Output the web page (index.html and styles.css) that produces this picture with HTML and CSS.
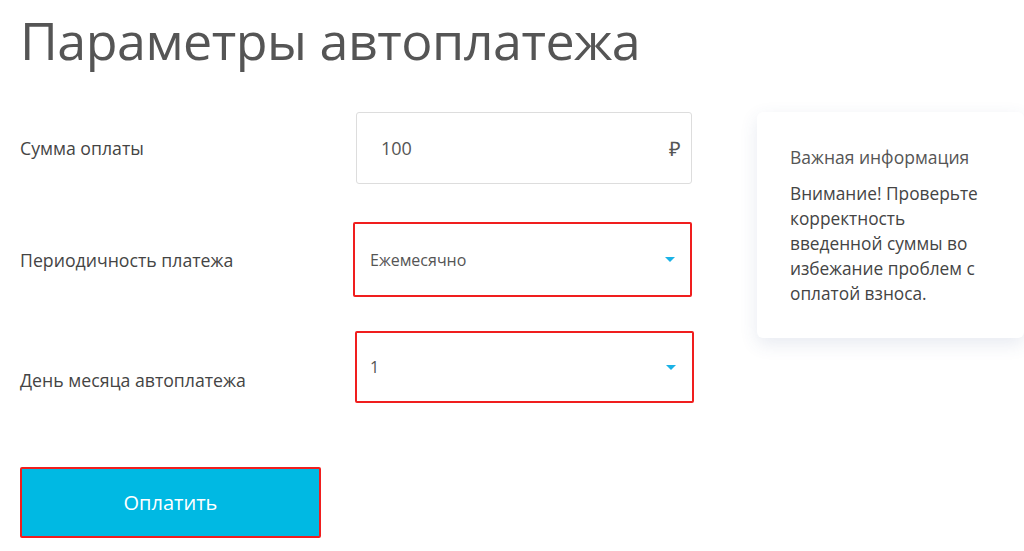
FILE: index.html
```html
<!DOCTYPE html>
<html lang="ru">
<head>
    <meta charset="utf-8">
    <title>Параметры автоплатежа</title>
    <link rel="stylesheet" href="styles.css">
</head>
<body>
    <div class="page">
        <h1 class="page-title">Параметры автоплатежа</h1>

        <div class="layout">
            <form class="autopay-form">
                <div class="form-row">
                    <label class="form-label" for="amount">Сумма оплаты</label>
                    <div class="field amount-field">
                        <input class="amount-input" id="amount" type="text" value="100">
                        <span class="currency">₽</span>
                    </div>
                </div>

                <div class="form-row">
                    <label class="form-label">Периодичность платежа</label>
                    <div class="field select-field marked">
                        <span class="select-value">Ежемесячно</span>
                        <span class="select-arrow"></span>
                    </div>
                </div>

                <div class="form-row form-row-last">
                    <label class="form-label form-label-low">День месяца автоплатежа</label>
                    <div class="field select-field select-day marked">
                        <span class="select-value">1</span>
                        <span class="select-arrow"></span>
                    </div>
                </div>

                <button class="pay-btn marked" type="button">Оплатить</button>
            </form>

            <div class="info-card">
                <div class="info-title">Важная информация</div>
                <p class="info-text">Внимание! Проверьте корректность введенной суммы во избежание проблем с оплатой взноса.</p>
            </div>
        </div>
    </div>
</body>
</html>
```

FILE: styles.css
```css
body {
    margin: 0;
    padding: 0;
    background-color: #fff;
    font-family: "Open Sans", Arial, sans-serif;
    color: #4a4a4a;
    overflow: hidden;
}

.page {
    padding: 0 0 0 20px;
}

.page-title {
    margin: 0;
    padding-top: 4px;
    font-size: 52px;
    font-weight: 400;
    line-height: 72px;
    color: #555;
    letter-spacing: -0.5px;
}

.layout {
    display: flex;
    gap: 63px;
    margin-top: 36px;
}

.autopay-form {
    display: flex;
    flex-direction: column;
    width: 674px;
    flex-shrink: 0;
}

.form-row {
    display: flex;
    align-items: center;
    margin-bottom: 38px;
}

.form-row + .form-row {
    margin-bottom: 34px;
}

.form-row + .form-row-last {
    margin-bottom: 64px;
}

.form-label {
    width: 336px;
    font-size: 17.7px;
    line-height: 24px;
    color: #444;
}

.form-label-low {
    align-self: flex-end;
    margin-bottom: 11px;
}

.field {
    display: flex;
    align-items: center;
    box-sizing: border-box;
    width: 336px;
    height: 72px;
    border: 1px solid #ddd;
    border-radius: 3px;
    background-color: #fff;
}

.amount-field {
    padding: 0 10px 0 24px;
}

.amount-input {
    flex: 1;
    border: none;
    outline: none;
    font-family: "Open Sans", Arial, sans-serif;
    font-size: 18px;
    color: #555;
    padding: 0;
}

.currency {
    font-size: 20px;
    color: #555;
}

.select-field {
    height: 75px;
    margin-left: -3px;
    width: 339px;
    padding: 0 15px 0 15px;
    justify-content: space-between;
}

.select-day {
    height: 72px;
    margin-left: -1px;
    padding-left: 13px;
    padding-right: 16px;
}

.marked {
    border: 2px solid #f01e1e;
    border-radius: 2px;
}

.select-value {
    font-size: 16px;
    color: #555;
}

.select-arrow {
    width: 0;
    height: 0;
    border-left: 5px solid transparent;
    border-right: 5px solid transparent;
    border-top: 5px solid #1ab2e6;
}

.pay-btn {
    width: 301px;
    height: 71px;
    box-sizing: border-box;
    background-color: #00b9e3;
    color: #fff;
    font-family: "Open Sans", Arial, sans-serif;
    font-size: 20px;
    cursor: pointer;
}

.info-card {
    box-sizing: border-box;
    width: 300px;
    height: 226px;
    padding: 33px 30px 0 33px;
    border-radius: 6px;
    background-color: #fff;
    box-shadow: 0 6px 18px rgba(60, 80, 140, 0.12);
}

.info-title {
    font-size: 17.5px;
    color: #555;
    line-height: 24px;
}

.info-text {
    margin: 12px 0 0;
    width: 196px;
    font-size: 17.3px;
    line-height: 25px;
    color: #444;
}
```
